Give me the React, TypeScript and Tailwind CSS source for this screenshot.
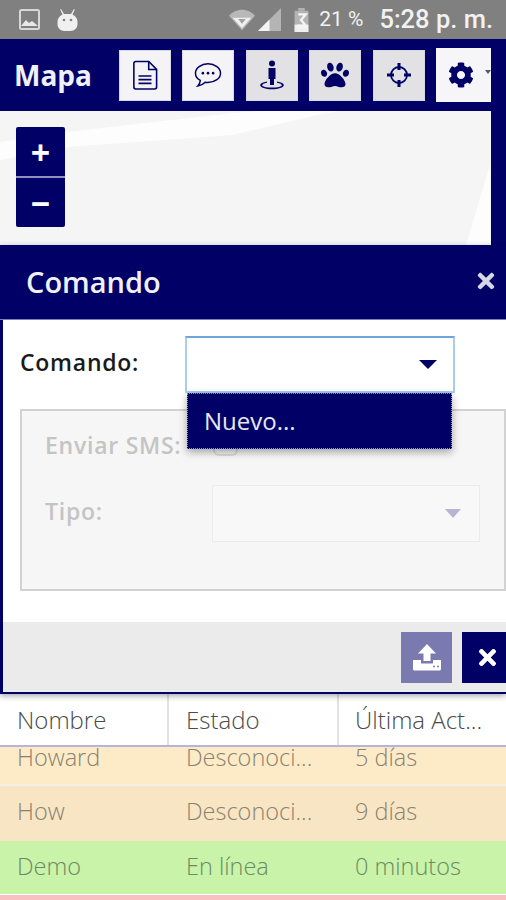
import { FaPaw, FaCog, FaTimes } from 'react-icons/fa'

const navy = '#000066'

function DocIcon() {
  return (
    <svg width="26" height="30" viewBox="0 0 28 32" fill="none" stroke="#000066" strokeWidth="1.700">
      <path d="M2 3.500a2 2 0 0 1 2-2h14l8.500 8.500v19a2 2 0 0 1-2 2H4a2 2 0 0 1-2-2z" />
      <path d="M18 1.500v8.500h8.500" />
      <path d="M7 17h14M7 21h14M7 25h14" strokeWidth="1.700" />
    </svg>
  )
}

function ChatIcon() {
  return (
    <svg width="30" height="26" viewBox="0 0 30 28" fill="none" stroke="#000066" strokeWidth="1.600">
      <path d="M15 2C7.500 2 1.500 6.500 1.500 12c0 3.200 2 6 5.200 7.800-.2 2.500-1.200 4.500-2.700 6 3.300-.5 6-2 8-4.100.9.200 2 .3 3 .3 7.500 0 13.500-4.500 13.500-10S22.500 2 15 2z" />
      <circle cx="9.500" cy="12" r="1.400" fill="#000066" stroke="none" />
      <circle cx="15" cy="12" r="1.400" fill="#000066" stroke="none" />
      <circle cx="20.500" cy="12" r="1.400" fill="#000066" stroke="none" />
    </svg>
  )
}

function PersonIcon() {
  return (
    <svg width="26" height="30" viewBox="0 0 26 30" fill="#000066">
      <circle cx="13" cy="3.500" r="3" />
      <path d="M9.500 8h7v11h-1.500v6h-4v-6H9.500z" />
      <path d="M8 21.500C3.500 22.300 1.200 23.600 1.200 25.200c0 2.300 5.300 4 11.800 4s11.800-1.700 11.800-4c0-1.600-2.300-2.900-6.800-3.700v1.300c3 .5 4.800 1.400 4.800 2.400 0 1.300-4.300 2.400-9.800 2.400s-9.800-1.100-9.800-2.400c0-1 1.800-1.900 4.800-2.400z" />
    </svg>
  )
}

function TargetIcon() {
  return (
    <svg width="26" height="26" viewBox="0 0 26 26" fill="none" stroke="#000066" strokeWidth="1.800">
      <circle cx="13" cy="13" r="8" />
      <path d="M13 1v7M13 18v7M1 13h7M18 13h7" strokeWidth="3" />
    </svg>
  )
}

function UploadIcon() {
  return (
    <svg width="30" height="28" viewBox="0 0 30 28" fill="#ffffff">
      <path d="M15 1l9 9.500h-5.500V18h-7v-7.500H6z" />
      <path d="M1 17h8v3.500h12V17h8v9a1.500 1.500 0 0 1-1.500 1.500h-25A1.500 1.500 0 0 1 1 26z" />
      <circle cx="22" cy="23.500" r="1" fill="#7a7ab0" />
      <circle cx="26" cy="23.500" r="1" fill="#7a7ab0" />
    </svg>
  )
}

function ToolButton({ children, active }: { children: React.ReactNode; active?: boolean }) {
  return (
    <div className={`flex h-[51px] w-[52px] items-center justify-center border border-[#d8d8e0] ${active ? 'bg-[#f4f4f6]' : 'bg-[#e2e2e4]'}`}>
      {children}
    </div>
  )
}

const rows = [
  { name: 'How', state: 'Desconoci...', last: '9 días', bg: 'bg-[#f8e5c3]', h: 'h-[55px] pb-[3px]', color: 'text-[#8a8270]' },
  { name: 'Demo', state: 'En línea', last: '0 minutos', bg: 'bg-[#c8f3a9]', h: 'h-[53px] pb-[1px]', color: 'text-[#6d8a62]' },
]

export default function App() {
  return (
    <div className="relative h-[900px] w-[506px] overflow-hidden bg-white font-['Open_Sans',sans-serif]">
      {/* status bar */}
      <div className="flex h-[39px] items-center bg-[#808080] pl-[19px] pr-[13px] font-['Roboto',sans-serif] text-[#f2f2f2]">
        <svg width="21" height="21" viewBox="0 0 21 21" fill="none">
          <rect x="1" y="1" width="19" height="19" rx="1.500" stroke="#d8d8d8" strokeWidth="2" />
          <path d="M2 17l5-6 3 3 3-2 6 5z" fill="#e8e8e8" />
        </svg>
        <svg className="ml-[17px]" width="21" height="22" viewBox="0 0 21 22" fill="#f0f0f0">
          <path d="M4 0l3 5h7l3-5 .8.5L15.500 5.500C19 7 20.500 10 20.500 13v2c0 4-3 7-7 7h-6c-4 0-7-3-7-7v-2c0-3 1.500-6 5-7.500L3.200.5z" />
          <circle cx="7" cy="11" r="1.300" fill="#808080" />
          <circle cx="14" cy="11" r="1.300" fill="#808080" />
        </svg>
        <svg className="ml-auto" width="26" height="22" viewBox="0 0 28 22" fill="#f0f0f0">
          <path d="M0 6.500C3.500 2.500 8.500 0 14 0s10.500 2.500 14 6.500L14 22z" fill="#b8b8b8" />
          <path d="M4 8.500h20L14 20z" />
          <path d="M10 10h8l-4 5z" fill="#a0a0a0" />
        </svg>
        <svg className="ml-[3px]" width="23" height="23" viewBox="0 0 24 24">
          <path d="M0 24L24 0v24z" fill="#b4b4b4" />
          <path d="M0 24l12-12v12z" fill="#f4f4f4" />
        </svg>
        <svg className="ml-[13px]" width="15" height="24" viewBox="0 0 15 26">
          <rect x="4" y="0" width="7" height="3" fill="#b4b4b4" />
          <rect x="0" y="3" width="15" height="23" fill="#b4b4b4" />
          <rect x="0" y="18" width="15" height="8" fill="#f0f0f0" />
          <path d="M4 7h8l-5 6 5 6H4v2h8" fill="none" stroke="#f4f4f4" strokeWidth="2.500" />
        </svg>
        <span className="ml-[10px] text-[21px]">21 %</span>
        <span className="ml-[16px] text-[25.500px] font-medium">5:28 p. m.</span>
      </div>

      {/* toolbar */}
      <div className="flex h-[72px] items-center bg-[#000066] pl-[14px]">
        <span className="w-[105px] text-[28px] font-bold leading-none text-[#eef0fa]">Mapa</span>
        <div className="flex items-center gap-[11.400px]">
          <ToolButton active><DocIcon /></ToolButton>
          <ToolButton active><ChatIcon /></ToolButton>
          <ToolButton><PersonIcon /></ToolButton>
          <ToolButton><FaPaw size={28} color={navy} /></ToolButton>
          <ToolButton><TargetIcon /></ToolButton>
          <div className="relative flex h-[54px] w-[55px] items-center justify-center bg-[#f6f6f8] pr-[4px]">
            <FaCog size={26} color={navy} />
            <div className="absolute right-0 top-[22px] h-0 w-0 border-x-[3px] border-t-[4px] border-x-transparent border-t-[#555577]" />
          </div>
        </div>
      </div>

      {/* map */}
      <div className="flex h-[134px] bg-[#000066]">
        <div className="relative w-[491px] bg-[#f5f5f5] pl-[16px] pt-[16px]">
          <svg className="absolute inset-0" width="491" height="134" viewBox="0 0 491 134">
            <path d="M0 31L67 21L233 2L260 0H340L317 4L233 24L67 36L0 49z" fill="#fdfdfd" />
            <path d="M466 134L490 54V134z" fill="#fdfdfd" />
          </svg>
          <div className="relative flex h-[100px] w-[49px] flex-col overflow-hidden rounded-[2px] bg-[#000066] text-white">
            <div className="flex h-[51px] items-center justify-center border-b-2 border-[#8f8fc0] text-[34px] font-bold leading-none">+</div>
            <div className="flex flex-1 items-center justify-center text-[34px] font-bold leading-none">−</div>
          </div>
        </div>
      </div>

      {/* command window */}
      <div className="relative z-10 border-b-2 border-l-[3px] border-[#000066] shadow-[0_2px_6px_rgba(0,0,0,0.35)]">
        <div className="-ml-[3px] flex h-[75px] items-center justify-between border-b border-[#7f7fc0] bg-[#000066] pb-[2px] pl-[26px] pr-[8px]">
          <span className="text-[29px] font-semibold leading-none text-[#f0f0f8]">Comando</span>
          <FaTimes size={24} color="#d6d6e6" />
        </div>

        <div className="relative h-[302px] bg-white pl-[17px] pt-[16px]">
          <div className="flex items-center">
            <span className="-mt-[6px] w-[165px] text-[23px] font-semibold leading-[30px] tracking-[0.750px] text-[#1a1a1a]">Comando:</span>
            <div className="flex h-[57px] w-[270px] items-center justify-end border-2 border-[#a9cdea] border-t-[#6fa6d8] bg-white pr-[16px]">
              <div className="h-0 w-0 border-x-[9px] border-t-[9px] border-x-transparent border-t-[#000066]" />
            </div>
          </div>

          <div className="mt-[16px] h-[182px] w-[486px] border-2 border-[#d2d2d2] bg-[#f6f6f6] pl-[23px] pt-[20px] text-[23px] font-semibold tracking-[0.750px] text-[#c4c4c4]">
            <div className="flex h-[28px] items-center">
              <span className="w-[168px] shrink-0">Enviar SMS:</span>
              <div className="h-[22px] w-[25px] rounded-[6px] border-2 border-[#dcdcdc]" />
            </div>
            <div className="mt-[26px] flex items-center">
              <span className="-mt-[4px] w-[167px]">Tipo:</span>
              <div className="flex h-[57px] w-[268px] items-center justify-end border border-[#ececec] bg-[#f8f8f8] pr-[18px]">
                <div className="h-0 w-0 border-x-[8px] border-t-[9px] border-x-transparent border-t-[#b8b4d4]" />
              </div>
            </div>
          </div>

          {/* open dropdown */}
          <div className="absolute left-[184px] top-[73px] flex h-[56px] w-[265px] items-center border border-dotted border-[#8f8fc0] bg-[#000066] pl-[16px] text-[24px] text-[#e8e8f6] shadow-[0_3px_8px_rgba(0,0,0,0.35)]">
            Nuevo...
          </div>
        </div>

        <div className="flex h-[70px] items-center justify-end gap-[10px] bg-[#ebebeb]">
          <div className="flex h-[51px] w-[51px] items-center justify-center bg-[#7a7ab0]">
            <UploadIcon />
          </div>
          <div className="flex h-[51px] w-[44px] items-center justify-center bg-[#000066] pl-[6px]">
            <FaTimes size={25} color="#ffffff" />
          </div>
        </div>
      </div>

      {/* table */}
      <div className="flex h-[53px] border-b-2 border-[#b4b4dc] bg-white text-[24px] font-light text-[#4a4a4a]">
        <div className="flex w-[169px] items-center border-r-2 border-[#e2e2e2] pl-[17px]">Nombre</div>
        <div className="flex w-[170px] items-center border-r-2 border-[#e2e2e2] pl-[17px]">Estado</div>
        <div className="flex flex-1 items-center pl-[16px]">Última Act...</div>
      </div>

      <div className="flex h-[39px] overflow-hidden border-b-2 border-[#f4f0e6] bg-[#fdebc8] text-[23.500px] font-light leading-[20px] text-[#8a8270]">
        <div className="w-[169px] pl-[17px]">Howard</div>
        <div className="w-[170px] pl-[17px]">Desconoci...</div>
        <div className="pl-[16px]">5 días</div>
      </div>
      {rows.map((row) => (
        <div key={row.name} className={`flex ${row.h} items-center ${row.bg} ${row.color} text-[23.500px] font-light`}>
          <div className="w-[169px] pl-[17px]">{row.name}</div>
          <div className="w-[170px] pl-[17px]">{row.state}</div>
          <div className="pl-[16px]">{row.last}</div>
        </div>
      ))}
      <div className="mt-[1px] h-[10px] bg-[#f8c0c0]" />
    </div>
  )
}
